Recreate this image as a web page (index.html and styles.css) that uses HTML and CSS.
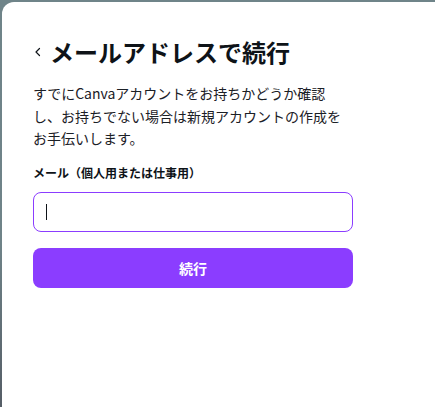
FILE: index.html
```html
<!DOCTYPE html>
<html lang="ja">
<head>
<meta charset="utf-8">
<link rel="stylesheet" href="styles.css">
</head>
<body>
<div class="card">
  <div class="content">
    <div class="title-row">
      <button class="back" aria-label="戻る">
        <svg width="10" height="12" viewBox="0 0 10 12"><path d="M6.5 2.5 L3 6 L6.5 9.5" fill="none" stroke="#0e1318" stroke-width="1.2" stroke-linecap="round" stroke-linejoin="round"/></svg>
      </button>
      <h1 class="title">メールアドレスで続行</h1>
    </div>
    <p class="desc">すでにCanvaアカウントをお持ちかどうか確認し、お持ちでない場合は新規アカウントの作成をお手伝いします。</p>
    <label class="label">メール（個人用または仕事用）</label>
    <div class="input"><span class="caret"></span></div>
    <button class="submit">続行</button>
  </div>
</div>
</body>
</html>
```
FILE: styles.css
```css
html, body {
  margin: 0;
  height: 100%;
}
body {
  background: linear-gradient(180deg, #6f8489 0%, #6f8388 60%, #555d66 100%);
  font-family: "Noto Sans CJK JP", "Noto Sans", sans-serif;
  color: #0e1318;
  padding: 2px 0 0 2px;
  box-sizing: border-box;
  overflow: hidden;
}
.card {
  background: #fff;
  border-top-left-radius: 12px;
  height: 100%;
}
.content {
  padding: 34px 0 0 31px;
  width: 320px;
}
.title-row {
  display: flex;
  align-items: center;
  gap: 6px;
  height: 32px;
}
.back {
  border: 0;
  background: none;
  padding: 0;
  width: 11px;
  height: 12px;
  display: flex;
  align-items: center;
  justify-content: flex-start;
}
.title {
  margin: 0;
  font-size: 24px;
  font-weight: 700;
  line-height: 32px;
  letter-spacing: 0;
}
.desc {
  margin: 14px 0 0;
  font-size: 14px;
  line-height: 22.5px;
  font-weight: 400;
  color: #1b2026;
}
.label {
  display: block;
  margin-top: 15px;
  font-size: 12px;
  font-weight: 700;
  line-height: 16px;
}
.input {
  margin-top: 11px;
  height: 40px;
  border: 1px solid #8b3dff;
  border-radius: 8px;
  box-sizing: border-box;
  display: flex;
  align-items: center;
  padding-left: 12px;
}
.caret {
  width: 1px;
  height: 16px;
  background: #0e1318;
}
.submit {
  margin-top: 16px;
  display: block;
  width: 100%;
  height: 40px;
  border: 0;
  border-radius: 8px;
  background: #8b3dff;
  color: #fff;
  font-family: inherit;
  font-size: 14px;
  font-weight: 700;
}
```
